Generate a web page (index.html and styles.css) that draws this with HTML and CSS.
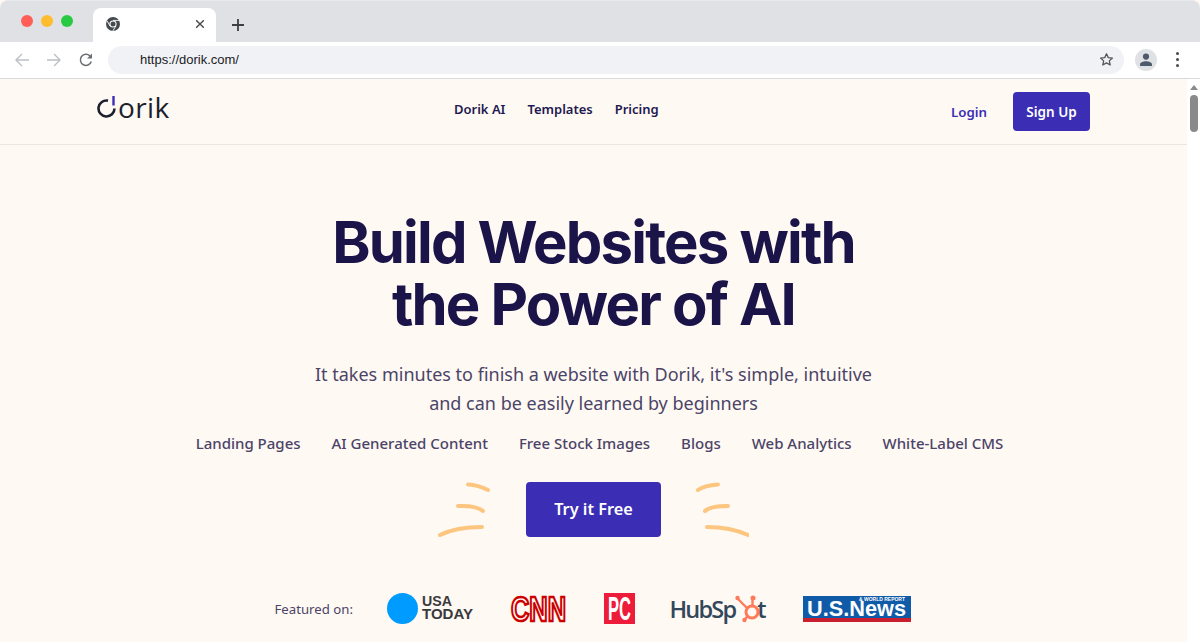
FILE: index.html
```html
<!DOCTYPE html>
<html lang="en">
<head>
    <meta charset="UTF-8">
    <meta name="viewport" content="width=device-width, initial-scale=1.0">
    <title>Dorik</title>
    <link rel="stylesheet" href="styles.css">
</head>
<body>
    <div class="tabbar">
        <div class="lights">
            <span class="light red"></span>
            <span class="light yellow"></span>
            <span class="light green"></span>
        </div>
        <div class="tab">
            <svg class="chrome-icon" width="14" height="14" viewBox="0 0 14 14">
                <circle cx="7" cy="7" r="7" fill="#45484c"/>
                <circle cx="7" cy="7" r="3.6" fill="#fff"/>
                <circle cx="7" cy="7" r="2.5" fill="#45484c"/>
                <path d="M7 3.4h6.2M4 9l-3-5.2M9.9 9l-3.1 5" stroke="#fff" stroke-width="0.9" fill="none"/>
            </svg>
            <svg class="tab-close" width="10" height="10" viewBox="0 0 10 10">
                <path d="M1.2 1.2l7.6 7.6M8.8 1.2l-7.6 7.6" stroke="#45484c" stroke-width="1.4"/>
            </svg>
        </div>
        <svg class="new-tab" width="12" height="12" viewBox="0 0 12 12">
            <path d="M6 0v12M0 6h12" stroke="#3c4043" stroke-width="1.8"/>
        </svg>
    </div>

    <div class="toolbar">
        <svg class="tool-icon" width="16" height="16" viewBox="0 0 16 16">
            <path d="M15 8H2M8 2L2 8l6 6" stroke="#bcbfc4" stroke-width="1.4" fill="none"/>
        </svg>
        <svg class="tool-icon" width="16" height="16" viewBox="0 0 16 16">
            <path d="M1 8h13M8 2l6 6-6 6" stroke="#bcbfc4" stroke-width="1.4" fill="none"/>
        </svg>
        <svg class="tool-icon" width="16" height="16" viewBox="0 0 16 16">
            <path d="M13.3 9.6A5.6 5.6 0 1 1 12 3.9" stroke="#6b6e72" stroke-width="1.5" fill="none"/>
            <path d="M14 1.5v5h-5z" fill="#6b6e72"/>
        </svg>
        <div class="address">
            <span class="url">https://dorik.com/</span>
            <svg width="15" height="15" viewBox="0 0 24 24">
                <path d="M12 2.8l2.8 6.2 6.7.7-5 4.5 1.4 6.6-5.9-3.4-5.9 3.4 1.4-6.6-5-4.5 6.7-.7z" stroke="#505357" stroke-width="2" fill="none" stroke-linejoin="round"/>
            </svg>
        </div>
        <div class="avatar">
            <svg width="14" height="14" viewBox="0 0 14 14">
                <circle cx="7" cy="3.6" r="3.1" fill="#4d5a6b"/>
                <path d="M1 13v-1.5c0-2 3.5-3.2 6-3.2s6 1.2 6 3.2V13z" fill="#4d5a6b"/>
            </svg>
        </div>
        <div class="kebab"><span></span><span></span><span></span></div>
    </div>

    <div class="viewport">
        <div class="page">
            <header class="site-nav">
                <a class="logo">
                    <svg width="21" height="24" viewBox="0 0 21 24">
                        <path d="M11 5.6A8 8 0 1 0 17.5 13.5" stroke="#1b1f2e" stroke-width="2.6" fill="none"/>
                        <path d="M16.5 1v9.5" stroke="#3b2eb5" stroke-width="2.4"/>
                    </svg>
                    <span>orik</span>
                </a>
                <nav class="nav-links">
                    <a>Dorik AI</a>
                    <a>Templates</a>
                    <a>Pricing</a>
                </nav>
                <div class="nav-actions">
                    <a class="login">Login</a>
                    <a class="btn btn-small">Sign Up</a>
                </div>
            </header>

            <main class="hero">
                <h1>Build Websites with<br>the Power of AI</h1>
                <p class="lead">It takes minutes to finish a website with Dorik, it's simple, intuitive<br>and can be easily learned by beginners</p>
                <ul class="features">
                    <li>Landing Pages</li>
                    <li>AI Generated Content</li>
                    <li>Free Stock Images</li>
                    <li>Blogs</li>
                    <li>Web Analytics</li>
                    <li>White-Label CMS</li>
                </ul>
                <div class="cta">
                    <svg width="54" height="58" viewBox="0 0 54 58">
                        <path d="M30 2.5c5 .3 13 2 20 5.5M20 24c8-.3 20 .5 25 5M2 53c10-5 24-8 42-8" class="spark"/>
                    </svg>
                    <a class="btn btn-large">Try it Free</a>
                    <svg width="54" height="58" viewBox="0 0 54 58">
                        <path d="M3 8c4-3 12-5 20-5.5M10 29c4-4 14-5 23-5M12 45c16 0 30 3 41 8" class="spark"/>
                    </svg>
                </div>
                <div class="featured">
                    <span class="featured-label">Featured on:</span>
                    <svg class="logo-usa" width="86" height="31" viewBox="0 0 86 31">
                        <circle cx="15.5" cy="15.5" r="15.5" fill="#009bff"/>
                        <text x="35" y="13" textLength="30" lengthAdjust="spacingAndGlyphs">USA</text>
                        <text x="35" y="26" textLength="51" lengthAdjust="spacingAndGlyphs">TODAY</text>
                    </svg>
                    <svg class="logo-cnn" width="57" height="30" viewBox="0 0 57 30">
                        <text x="1" y="26.5" textLength="55" lengthAdjust="spacingAndGlyphs">CNN</text>
                    </svg>
                    <svg class="logo-pc" width="31" height="31" viewBox="0 0 31 31">
                        <rect width="31" height="31" fill="#ed1c3a"/>
                        <text x="4" y="27" textLength="23" lengthAdjust="spacingAndGlyphs">PC</text>
                    </svg>
                    <span class="logo-hubspot">HubSp<svg width="25" height="30" viewBox="0 0 25 30">
                        <circle cx="17" cy="18" r="6" fill="none" stroke="#ff7a59" stroke-width="3"/>
                        <path d="M17.5 12V5M12.5 22l-3 4M12 14L3 5" stroke="#ff7a59" stroke-width="2.4"/>
                        <circle cx="18" cy="4" r="2.5" fill="#ff7a59"/>
                        <circle cx="2.5" cy="4" r="2.2" fill="#ff7a59"/>
                        <circle cx="9.5" cy="26" r="2.2" fill="#ff7a59"/>
                    </svg><span class="hubspot-t">t</span></span>
                    <svg class="logo-usnews" width="108" height="26" viewBox="0 0 108 26">
                        <rect width="108" height="26" fill="#0f5ba7"/>
                        <rect y="22" width="108" height="4" fill="#c8202f"/>
                        <text class="usnews-small" x="56" y="5" textLength="46" lengthAdjust="spacingAndGlyphs">&amp; WORLD REPORT</text>
                        <text class="usnews-main" x="4" y="20" textLength="99" lengthAdjust="spacingAndGlyphs">U.S.News</text>
                    </svg>
                </div>
            </main>
        </div>
        <div class="scrollbar">
            <span class="scroll-up"></span>
            <span class="scroll-thumb"></span>
        </div>
    </div>
</body>
</html>
```

FILE: styles.css
```css
:root {
    --color-page: #fff9f3;
    --color-brand: #3b2eb5;
    --color-ink: #1a1449;
    --color-text: #4b4468;
}

* {
    box-sizing: border-box;
}

html, body {
    height: 100%;
}

body {
    margin: 0;
    overflow: hidden;
    display: flex;
    flex-direction: column;
    font-family: "Noto Sans", "Open Sans", sans-serif;
    background-color: var(--color-page);
}

/* browser chrome */
.tabbar {
    height: 42px;
    flex: none;
    display: flex;
    align-items: flex-end;
    padding-left: 21px;
    background-color: #dfe1e5;
    border-top: 1px solid #e8e9ec;
    border-radius: 8px 8px 0 0;
}

.lights {
    display: flex;
    gap: 8px;
    align-self: flex-start;
    margin-top: 14px;
}

.light {
    width: 12px;
    height: 12px;
    border-radius: 50%;
}

.red { background-color: #ff5f57; }
.yellow { background-color: #ffbd2e; }
.green { background-color: #28ca42; }

.tab {
    width: 123px;
    height: 34px;
    margin-left: 20px;
    padding: 0 11px 2px 13px;
    display: flex;
    align-items: center;
    justify-content: space-between;
    background-color: #fff;
    border-radius: 8px 8px 0 0;
}

.new-tab {
    margin: 0 0 11px 16px;
}

.toolbar {
    height: 37px;
    flex: none;
    display: flex;
    align-items: center;
    padding: 0 16px 1px 14px;
    background-color: #fff;
    border-bottom: 1px solid #d9dadd;
}

.tool-icon {
    margin-right: 16px;
}

.tool-icon:nth-child(3) {
    margin-right: 14px;
}

.address {
    width: 1016px;
    height: 28px;
    margin-right: 11px;
    padding: 0 10px 0 32px;
    display: flex;
    align-items: center;
    justify-content: space-between;
    background-color: #f0f2f5;
    border-radius: 14px;
}

.url {
    font-family: "Liberation Sans", Arial, sans-serif;
    font-size: 13px;
    color: #202124;
}

.avatar {
    width: 22px;
    height: 22px;
    display: flex;
    align-items: center;
    justify-content: center;
    background-color: #dfe1e5;
    border-radius: 50%;
}

.kebab {
    margin-left: 19px;
    display: flex;
    flex-direction: column;
    gap: 3px;
}

.kebab span {
    width: 3px;
    height: 3px;
    border-radius: 50%;
    background-color: #45484c;
}

/* page */
.viewport {
    flex: 1;
    min-height: 0;
    display: flex;
}

.page {
    flex: 1;
    min-width: 0;
}

.scrollbar {
    width: 13px;
    flex: none;
    padding-top: 6px;
    display: flex;
    flex-direction: column;
    align-items: center;
    gap: 5px;
    background-color: #fff;
}

.scroll-up {
    width: 0;
    height: 0;
    border-left: 4px solid transparent;
    border-right: 4px solid transparent;
    border-bottom: 5px solid #8a8a8a;
}

.scroll-thumb {
    width: 8px;
    height: 37px;
    background-color: #8a8a8a;
    border-radius: 4px;
}

.site-nav {
    height: 66px;
    display: flex;
    align-items: center;
    padding: 0 97px;
    border-bottom: 1px solid #ebe6e3;
}

.logo {
    width: 357px;
    display: flex;
    align-items: flex-end;
    margin-top: -9px;
    font-family: "Open Sans", sans-serif;
    font-size: 28px;
    line-height: 24px;
    font-weight: 500;
    letter-spacing: 0.4px;
    color: #1b1f2e;
}

.nav-links {
    display: flex;
    gap: 22px;
    margin-top: -6px;
}

.nav-links a {
    font-size: 13px;
    font-weight: 600;
    color: #1d1a50;
}

.nav-actions {
    margin-left: auto;
    display: flex;
    align-items: center;
    gap: 26px;
}

.login {
    font-size: 13.3px;
    font-weight: 600;
    color: var(--color-brand);
}

.btn {
    display: block;
    color: #fff;
    font-weight: 600;
    background-color: var(--color-brand);
    border-radius: 4px;
    text-align: center;
}

.btn-small {
    width: 77px;
    height: 39px;
    font-size: 13.5px;
    line-height: 40px;
}

.btn-large {
    width: 135px;
    height: 55px;
    font-size: 16.3px;
    line-height: 55px;
}

.hero {
    display: flex;
    flex-direction: column;
    align-items: center;
}

h1 {
    margin: 66px 0 0;
    font-family: "Inter", sans-serif;
    font-size: 58px;
    line-height: 62px;
    font-weight: 700;
    letter-spacing: -1.8px;
    text-align: center;
    color: var(--color-ink);
}

.lead {
    margin: 25px 0 0;
    font-size: 18px;
    line-height: 29px;
    text-align: center;
    color: var(--color-text);
}

.features {
    list-style: none;
    margin: 15px 0 0 12px;
    padding: 0;
    display: flex;
    gap: 31px;
}

.features li {
    font-size: 15px;
    line-height: 20px;
    font-weight: 500;
    color: var(--color-text);
}

.cta {
    margin-top: 29px;
    display: flex;
    align-items: flex-start;
    gap: 34px;
}

.spark {
    fill: none;
    stroke: #fdc680;
    stroke-width: 4;
    stroke-linecap: round;
}

.featured {
    margin: 53px 0 0 -2px;
    display: flex;
    align-items: center;
}

.featured svg {
    overflow: visible;
}

.featured-label {
    width: 78px;
    font-size: 13.2px;
    white-space: nowrap;
    color: var(--color-text);
    margin-right: 34px;
}

/* press logos */
.logo-usa {
    margin-right: 37px;
}

.logo-usa text {
    font-family: "Liberation Sans", sans-serif;
    font-size: 14px;
    font-weight: 700;
    fill: #3a3a3c;
}

.logo-cnn {
    margin-right: 37px;
}

.logo-cnn text {
    font-family: "Liberation Sans", sans-serif;
    font-size: 35px;
    font-weight: 700;
    fill: #fff9f3;
    stroke: #cc0000;
    stroke-width: 2.6;
}

.logo-pc {
    margin-right: 35px;
}

.logo-pc text {
    font-family: "Liberation Sans", sans-serif;
    font-size: 33px;
    font-weight: 700;
    fill: #fff;
}

.logo-hubspot {
    width: 97px;
    display: flex;
    align-items: center;
    font-family: "Open Sans", sans-serif;
    font-size: 23.5px;
    line-height: 30px;
    font-weight: 600;
    letter-spacing: -1.8px;
    color: #33475b;
    margin-right: 36px;
}

.hubspot-t {
    margin-left: -3px;
}

.logo-usnews text {
    font-family: "Liberation Sans", sans-serif;
    font-weight: 700;
    fill: #fff;
}

.usnews-main {
    font-size: 22px;
}

.usnews-small {
    font-size: 5px;
}
```
